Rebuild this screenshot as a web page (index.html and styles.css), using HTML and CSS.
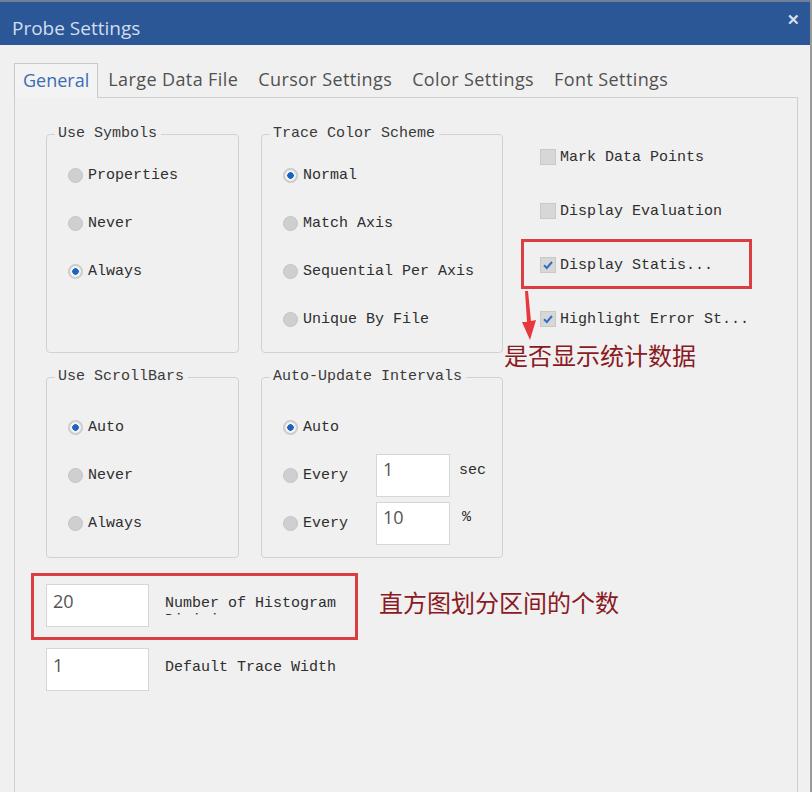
FILE: index.html
```html
<!DOCTYPE html>
<html>
<head>
    <meta charset="UTF-8">
    <title>Probe Settings</title>
    <link rel="stylesheet" href="styles.css">
</head>
<body>
    <div class="window">
        <div class="titleBar">
            <span class="titleText">Probe Settings</span>
            <span class="closeBtn">&#x2715;</span>
        </div>

        <div class="dialogBody">
            <div class="tabStrip">
                <div class="tab tabActive">General</div>
                <div class="tab">Large Data File</div>
                <div class="tab">Cursor Settings</div>
                <div class="tab">Color Settings</div>
                <div class="tab">Font Settings</div>
            </div>

            <div class="tabPanel">
                <div class="groupGrid">
                    <fieldset class="group groupTop">
                        <legend>Use Symbols</legend>
                        <div class="radioRow"><span class="radio"></span>Properties</div>
                        <div class="radioRow"><span class="radio"></span>Never</div>
                        <div class="radioRow"><span class="radio radioOn"></span>Always</div>
                    </fieldset>

                    <fieldset class="group groupTop">
                        <legend>Trace Color Scheme</legend>
                        <div class="radioRow"><span class="radio radioOn"></span>Normal</div>
                        <div class="radioRow"><span class="radio"></span>Match Axis</div>
                        <div class="radioRow"><span class="radio"></span>Sequential Per Axis</div>
                        <div class="radioRow"><span class="radio"></span>Unique By File</div>
                    </fieldset>

                    <div class="checkColumn">
                        <div class="checkRow"><span class="check"></span>Mark Data Points</div>
                        <div class="checkRow"><span class="check"></span>Display Evaluation</div>
                        <div class="checkRow"><span class="check checkOn"><svg width="12" height="12" viewBox="0 0 12 12"><path d="M2 6.2 L4.8 9 L10 3" fill="none" stroke="#2f6fc4" stroke-width="2"/></svg></span>Display Statis...</div>
                        <div class="checkRow"><span class="check checkOn"><svg width="12" height="12" viewBox="0 0 12 12"><path d="M2 6.2 L4.8 9 L10 3" fill="none" stroke="#2f6fc4" stroke-width="2"/></svg></span>Highlight Error St...</div>
                    </div>

                    <fieldset class="group groupBottom">
                        <legend>Use ScrollBars</legend>
                        <div class="radioRow"><span class="radio radioOn"></span>Auto</div>
                        <div class="radioRow"><span class="radio"></span>Never</div>
                        <div class="radioRow"><span class="radio"></span>Always</div>
                    </fieldset>

                    <fieldset class="group groupBottom">
                        <legend>Auto-Update Intervals</legend>
                        <div class="radioRow"><span class="radio radioOn"></span>Auto</div>
                        <div class="radioRow">
                            <span class="everyLabel"><span class="radio"></span>Every</span>
                            <input class="field smallField" type="text" value="1">
                            <span class="unit unitSec">sec</span>
                        </div>
                        <div class="radioRow">
                            <span class="everyLabel"><span class="radio"></span>Every</span>
                            <input class="field smallField" type="text" value="10">
                            <span class="unit unitPct">%</span>
                        </div>
                    </fieldset>
                </div>

                <div class="numRow">
                    <input class="field numField" type="text" value="20">
                    <div class="numLabel">Number of Histogram Divisions</div>
                </div>
                <div class="numRow numRowLast">
                    <input class="field numField" type="text" value="1">
                    <div class="numLabel">Default Trace Width</div>
                </div>
            </div>
        </div>

        <!-- annotations drawn on top of the screenshot -->
        <div class="markBox markStats"></div>
        <div class="markBox markHisto"></div>
        <svg class="markArrow" width="40" height="60" viewBox="0 0 40 60">
            <polygon points="10,5 13,5 16,35 21,34 15,54 7,36 12,36" fill="#e8383d"/>
        </svg>
        <div class="note noteStats">是否显示统计数据</div>
        <div class="note noteHisto">直方图划分区间的个数</div>
    </div>
</body>
</html>
```

FILE: styles.css
```css
body {
    margin: 0;
    background: #f0f0f0;
}

.window {
    position: relative;
    width: 810px;
    height: 792px;
    overflow: hidden;
    background: #f0f0f0;
    border-right: 2px solid #9a9a9a;
    font-family: "Liberation Mono", monospace;
}

.titleBar {
    height: 43px;
    border-top: 2px solid #6f7f97;
    background: #2b5797;
    display: flex;
    align-items: center;
    justify-content: space-between;
    padding: 0 10px 0 12px;
    font-family: "Open Sans", "Noto Sans", sans-serif;
}

.titleText {
    font-size: 19px;
    color: #d3ddef;
    margin-top: 9px;
}

.closeBtn {
    font-size: 15px;
    color: #d9e1ee;
    font-weight: bold;
    margin-top: -10px;
}

.dialogBody {
    padding: 18px 0 0 14px;
}

.tabStrip {
    display: flex;
    height: 34px;
    font-family: "Open Sans", "Noto Sans", sans-serif;
    font-size: 18px;
    letter-spacing: 0.4px;
    color: #505050;
}

.tab {
    padding: 0 10px;
    line-height: 32px;
}

.tabActive {
    padding: 0 8px;
    letter-spacing: 0;
    color: #3b6db3;
    border: 1px solid #c9c9c9;
    border-bottom: none;
    background: #f3f3f3;
    position: relative;
    z-index: 1;
    height: 34px;
}

.tabPanel {
    width: 784px;
    height: 700px;
    border: 1px solid #cfcfcf;
    border-bottom: none;
    padding: 27px 0 0 31px;
    box-sizing: border-box;
}

.groupGrid {
    display: grid;
    grid-template-columns: 193px 242px auto;
    column-gap: 22px;
    row-gap: 15px;
}

.group {
    margin: 0;
    padding: 8px 0 0 21px;
    border: 1px solid #d2d2d2;
    border-radius: 4px;
    box-sizing: border-box;
    min-width: 0;
}

.group legend {
    margin-left: -13px;
    padding: 0 4px 0 3px;
    font-size: 15px;
    line-height: 18px;
    color: #3a3a3a;
}

.groupTop {
    height: 228px;
}

.groupBottom {
    height: 190px;
    padding-top: 17px;
}

.radioRow {
    height: 48px;
    display: flex;
    align-items: center;
    font-size: 15px;
    color: #2e2e2e;
}

.radio {
    width: 15px;
    height: 15px;
    border-radius: 50%;
    background: #cfcfcf;
    border: 1px solid #c4c4c4;
    box-sizing: border-box;
    margin-right: 5px;
    flex: none;
}

.radioOn {
    background: radial-gradient(circle, #1d63c2 0 3px, #f2f2f2 3.5px 5px, #d4d4d4 5.5px);
}

.everyLabel {
    width: 93px;
    display: flex;
    align-items: center;
}

.field {
    box-sizing: border-box;
    background: #fff;
    border: 1px solid #d6d6d6;
    font-family: "Open Sans", "Noto Sans", sans-serif;
    font-size: 18px;
    color: #555;
    outline: none;
    margin: 0;
}

.smallField {
    width: 74px;
    height: 43px;
    padding: 0 6px 12px;
}

.unit {
    margin-left: 9px;
}

.unitSec {
    margin-top: -10px;
}

.unitPct {
    margin-left: 12px;
    margin-top: -12px;
}

.checkColumn {
    grid-row: span 2;
    margin: 5px 0 0 15px;
}

.checkRow {
    height: 54px;
    display: flex;
    align-items: center;
    font-size: 15px;
    color: #2e2e2e;
}

.check {
    width: 16px;
    height: 16px;
    box-sizing: border-box;
    background: #d7d7d7;
    border: 1px solid #c9c9c9;
    margin-right: 4px;
    display: flex;
    align-items: center;
    justify-content: center;
    flex: none;
}

.numRow {
    display: flex;
    gap: 16px;
    margin-top: 26px;
}

.numRowLast {
    margin-top: 21px;
}

.numField {
    width: 103px;
    height: 43px;
    padding: 0 6px 10px;
}

.numLabel {
    width: 180px;
    height: 20px;
    overflow: hidden;
    margin-top: 11px;
    font-size: 15px;
    line-height: 17px;
    color: #2e2e2e;
}

.markBox {
    position: absolute;
    border: 3px solid #dc3d43;
    box-sizing: border-box;
}

.markStats {
    left: 521px;
    top: 239px;
    width: 231px;
    height: 50px;
}

.markHisto {
    left: 31px;
    top: 573px;
    width: 327px;
    height: 67px;
}

.markArrow {
    position: absolute;
    left: 515px;
    top: 286px;
}

.note {
    position: absolute;
    font-family: "Noto Sans CJK SC", sans-serif;
    font-size: 24px;
    line-height: 28px;
    color: #8a1a1f;
}

.noteStats {
    left: 504px;
    top: 341px;
}

.noteHisto {
    left: 379px;
    top: 588px;
}
```
